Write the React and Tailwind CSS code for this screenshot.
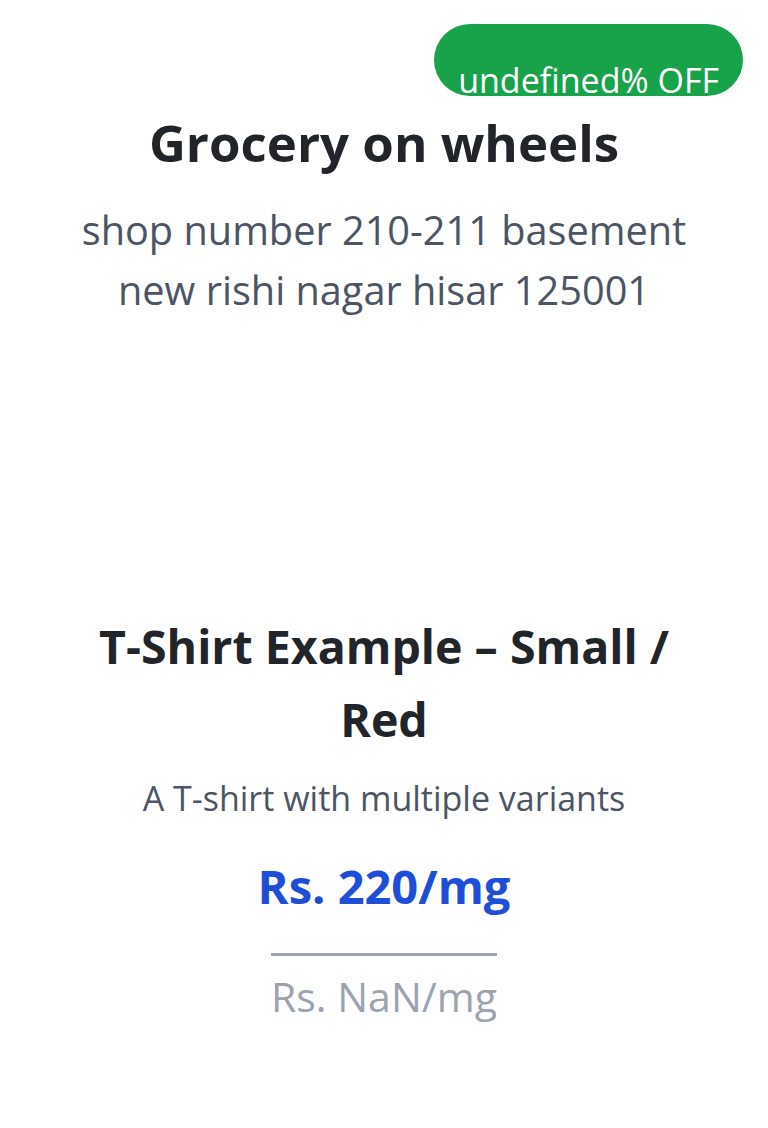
import React from "react";

export default function App() {
  const discount = undefined;
  const price = 220;
  const mrp = Number(undefined);

  return (
    <div
      className="w-full min-h-[1128px] bg-white flex flex-col items-center text-center"
      style={{ fontFamily: '"Open Sans", "Noto Sans", sans-serif' }}
    >
      {/* discount pill */}
      <div className="w-full flex justify-end pt-6 pr-[25px]">
        <div className="h-[72px] overflow-hidden whitespace-nowrap rounded-full bg-[#18a34a] px-6 pt-[36px] text-[34px] leading-[40px] text-white">
          {String(discount)}% OFF
        </div>
      </div>

      <h1 className="mt-4 text-[51px] leading-[60px] font-bold text-[#212529]">
        Grocery on wheels
      </h1>
      <p className="mt-[28px] w-[650px] text-[39.7px] leading-[60px] text-[#4b5563]">
        shop number 210-211 basement new rishi nagar hisar 125001
      </p>

      {/* product info */}
      <div className="mt-[290px] flex flex-col items-center">
        <h2 className="w-[620px] text-[46.5px] leading-[73px] font-bold text-[#212529]">
          T-Shirt Example – Small / Red
        </h2>
        <p className="mt-[18px] text-[34px] leading-[48px] text-[#4b5563]">
          A T-shirt with multiple variants
        </p>
        <p className="mt-[36px] text-[47px] leading-[56px] font-bold text-[#1d4ed8]">
          Rs. {price}/mg
        </p>
        <div className="mt-[39px] inline-flex flex-col items-center">
          <div className="h-[3px] w-full bg-[#9ca3af]" />
          <span className="mt-[12px] text-[41px] leading-[56px] text-[#9ca3af]">
            Rs. {mrp}/mg
          </span>
        </div>
      </div>
    </div>
  );
}
